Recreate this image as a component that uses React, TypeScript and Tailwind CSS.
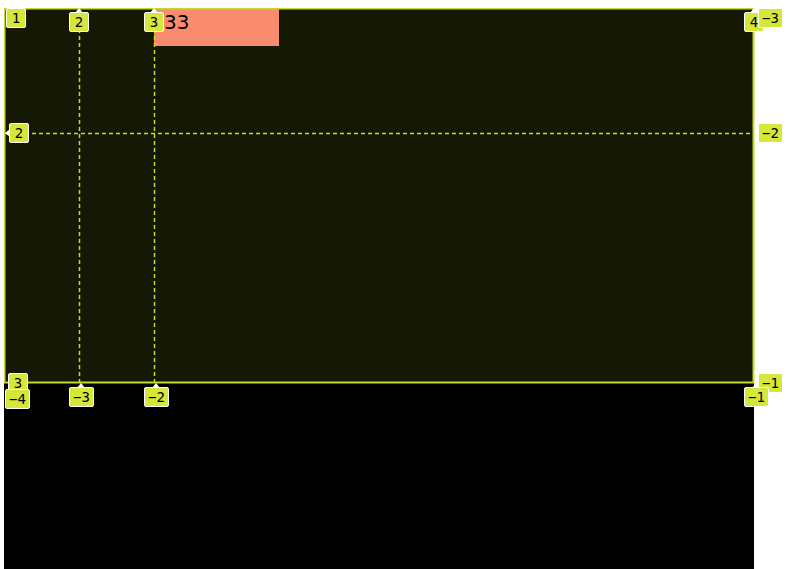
const Tag = ({
  text,
  className,
  arrow,
}: {
  text: string;
  className: string;
  arrow?: "up" | "left";
}) => (
  <div
    className={`absolute h-[20px] min-w-[20px] px-[3px] flex items-center justify-center bg-[#d5e83a] border border-white text-[14px] leading-none text-black rounded-[2px] ${className}`}
    style={{ fontFamily: '"DejaVu Sans Mono", monospace' }}
  >
    {arrow === "up" && (
      <span className="absolute -top-[5px] left-1/2 -ml-[4px] w-0 h-0 border-l-[4px] border-r-[4px] border-b-[5px] border-l-transparent border-r-transparent border-b-white" />
    )}
    {arrow === "left" && (
      <span className="absolute -left-[5px] top-1/2 -mt-[4px] w-0 h-0 border-t-[4px] border-b-[4px] border-r-[5px] border-t-transparent border-b-transparent border-r-white" />
    )}
    {text}
  </div>
);

export default function App() {
  return (
    <div className="w-[792px] h-[569px] bg-white pl-[4px] pt-[8px] overflow-hidden">
      <div className="relative w-[750px] h-[561px] bg-black">
        {/* grid container */}
        <div className="grid grid-cols-[75px_75px_600px] grid-rows-[125px_250px] bg-[#161806]">
          <div
            className="col-start-3 row-start-1 w-[125px] h-[38px] bg-[#f98c6e] pl-[10px] text-[20px] leading-[28px] text-black"
            style={{ fontFamily: '"DejaVu Sans", sans-serif' }}
          >
            33
          </div>
        </div>

        {/* grid inspector overlay */}
        <svg className="absolute left-0 top-0 pointer-events-none" width="752" height="377">
          <rect x="0.5" y="0.5" width="749" height="374" fill="none" stroke="#c6d92b" strokeWidth="2" />
          <line x1="75.5" y1="0" x2="75.5" y2="375" stroke="#c6d92b" strokeWidth="1.5" strokeDasharray="4 3" />
          <line x1="150.5" y1="0" x2="150.5" y2="375" stroke="#c6d92b" strokeWidth="1.5" strokeDasharray="4 3" />
          <line x1="0" y1="125.5" x2="750" y2="125.5" stroke="#c6d92b" strokeWidth="1.5" strokeDasharray="4 3" />
        </svg>

        <Tag text="1" className="left-[2px] top-[0px]" />
        <Tag text="2" className="left-[65px] top-[4px]" arrow="up" />
        <Tag text="3" className="left-[140px] top-[4px]" arrow="up" />
        <Tag text="4" className="left-[740px] top-[4px]" arrow="up" />
        <Tag text="−3" className="left-[754px] top-[0px]" />
        <Tag text="2" className="left-[5px] top-[115px]" arrow="left" />
        <Tag text="−2" className="left-[754px] top-[115px]" arrow="left" />
        <Tag text="3" className="left-[4px] top-[365px]" />
        <Tag text="−4" className="left-[1px] top-[381px]" />
        <Tag text="−3" className="left-[65px] top-[379px]" arrow="up" />
        <Tag text="−2" className="left-[140px] top-[379px]" arrow="up" />
        <Tag text="−1" className="left-[754px] top-[365px]" />
        <Tag text="−1" className="left-[740px] top-[379px]" arrow="up" />
      </div>
    </div>
  );
}
